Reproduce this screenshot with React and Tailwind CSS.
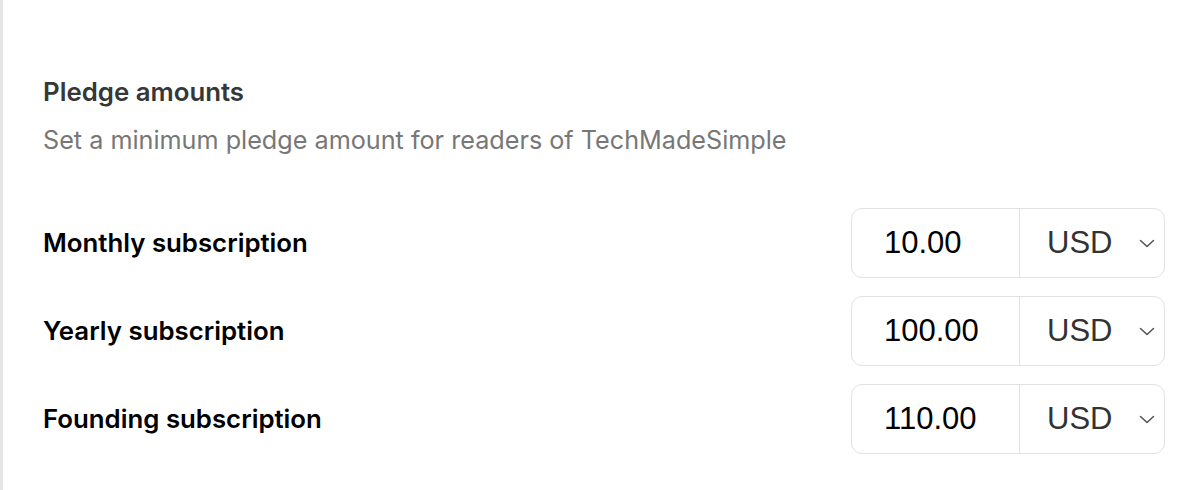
const ROWS = [
  { label: 'Monthly subscription', amount: '10.00' },
  { label: 'Yearly subscription', amount: '100.00' },
  { label: 'Founding subscription', amount: '110.00' },
];

function Chevron() {
  return (
    <svg width="18" height="10" viewBox="0 0 18 10" fill="none" stroke="#555" strokeWidth="1.6" strokeLinecap="round" strokeLinejoin="round">
      <path d="M2.5 2.5l6.5 6 6.5-6" />
    </svg>
  );
}

export default function App() {
  return (
    <div className="h-[490px] w-[1204px] overflow-hidden border-l-[3px] border-[#e6e6e6] bg-white font-['Inter',sans-serif]">
      <div className="pl-[40px] pr-[39px] pt-[77px]">
        <h2 className="text-[25.8px] font-semibold leading-[30px] text-[#363737]">Pledge amounts</h2>
        <p className="mt-[18px] text-[25.2px] leading-[30px] text-[#777]">
          Set a minimum pledge amount for readers of TechMadeSimple
        </p>

        <div className="mt-[53px] flex flex-col gap-[18px]">
          {ROWS.map((r) => (
            <div key={r.label} className="flex items-center justify-between">
              <span className="text-[25.8px] font-semibold text-black">{r.label}</span>
              <div className="flex h-[70px] w-[314px] rounded-[11px] border-[1.5px] border-[#e2e2e2] font-['Liberation_Sans',Arial,sans-serif]">
                <div className="flex w-[168px] items-center border-r-[1.5px] border-[#e2e2e2] pl-[32px] text-[31px] text-black">
                  {r.amount}
                </div>
                <div className="flex flex-1 items-center justify-between pl-[27px] pr-[8px] text-[31px] text-[#333]">
                  <span>USD</span>
                  <Chevron />
                </div>
              </div>
            </div>
          ))}
        </div>
      </div>
    </div>
  );
}
